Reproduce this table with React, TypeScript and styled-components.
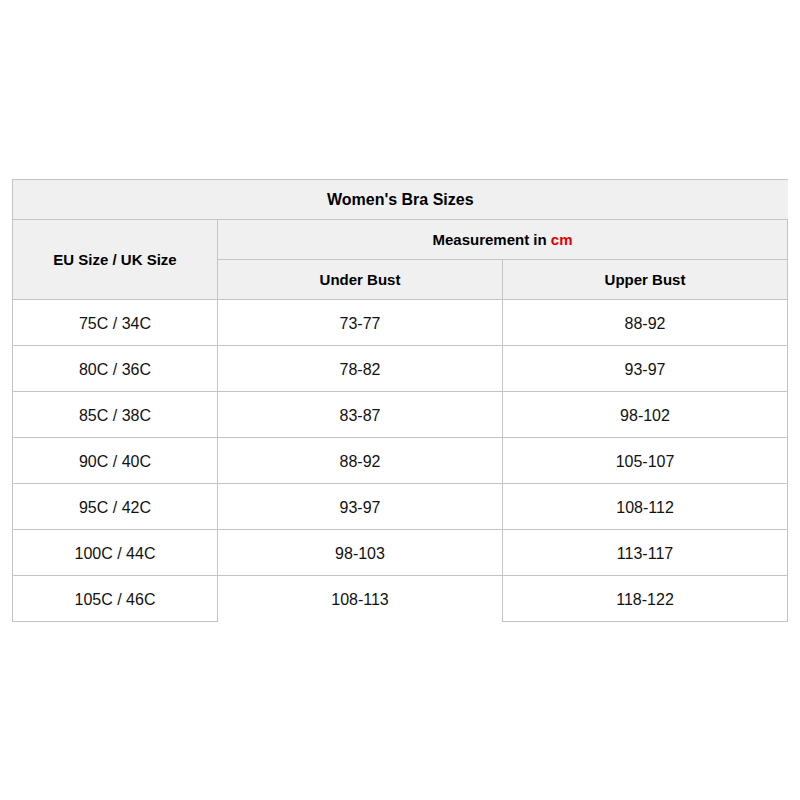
import React from "react";
import styled, { createGlobalStyle } from "styled-components";

const Global = createGlobalStyle`
  html, body { margin: 0; padding: 0; background: #fff; }
  body { font-family: "Liberation Sans", Arial, sans-serif; color: #000; }
`;

const Page = styled.div`
  padding: 179px 0 0 12px;
`;

const Table = styled.table`
  border-collapse: collapse;
  table-layout: fixed;
  width: 775px;
`;

const Cell = styled.td<{ $noRight?: boolean; $noBottom?: boolean; $h: number; $pt?: number }>`
  border: 1px solid #c4c4c4;
  ${(p) => (p.$noRight ? "border-right: none;" : "")}
  ${(p) => (p.$noBottom ? "border-bottom: none;" : "")}
  padding: ${(p) => p.$pt ?? 0}px 0 0 0;
  height: ${(p) => p.$h - 1 - (p.$pt ?? 0)}px;
  text-align: center;
  vertical-align: middle;
  font-size: 16px;
  color: #111;
`;

const HeadCell = styled(Cell).attrs({ as: "th" })<{ $big?: boolean }>`
  background: #f0f0f0;
  font-weight: bold;
  font-size: ${(p) => (p.$big ? 16 : 15)}px;
  color: #000;
`;

const Red = styled.span`
  color: #e00000;
`;

const rows: [string, string, string][] = [
  ["75C / 34C", "73-77", "88-92"],
  ["80C / 36C", "78-82", "93-97"],
  ["85C / 38C", "83-87", "98-102"],
  ["90C / 40C", "88-92", "105-107"],
  ["95C / 42C", "93-97", "108-112"],
  ["100C / 44C", "98-103", "113-117"],
  ["105C / 46C", "108-113", "118-122"],
];

export default function App() {
  return (
    <>
      <Global />
      <Page>
        <Table>
          <colgroup>
            <col style={{ width: 205 }} />
            <col style={{ width: 285 }} />
            <col style={{ width: 285 }} />
          </colgroup>
          <thead>
            <tr>
              <HeadCell colSpan={3} $h={40} $big $noRight>
                Women's Bra Sizes
              </HeadCell>
            </tr>
            <tr>
              <HeadCell rowSpan={2} $h={40}>
                EU Size / UK Size
              </HeadCell>
              <HeadCell colSpan={2} $h={40}>
                Measurement in <Red>cm</Red>
              </HeadCell>
            </tr>
            <tr>
              <HeadCell $h={40}>Under Bust</HeadCell>
              <HeadCell $h={40}>Upper Bust</HeadCell>
            </tr>
          </thead>
          <tbody>
            {rows.map((r, i) => (
              <tr key={r[0]}>
                <Cell $h={46} $pt={2}>{r[0]}</Cell>
                <Cell $h={46} $pt={2} $noBottom={i === rows.length - 1}>
                  {r[1]}
                </Cell>
                <Cell $h={46} $pt={2}>{r[2]}</Cell>
              </tr>
            ))}
          </tbody>
        </Table>
      </Page>
    </>
  );
}
